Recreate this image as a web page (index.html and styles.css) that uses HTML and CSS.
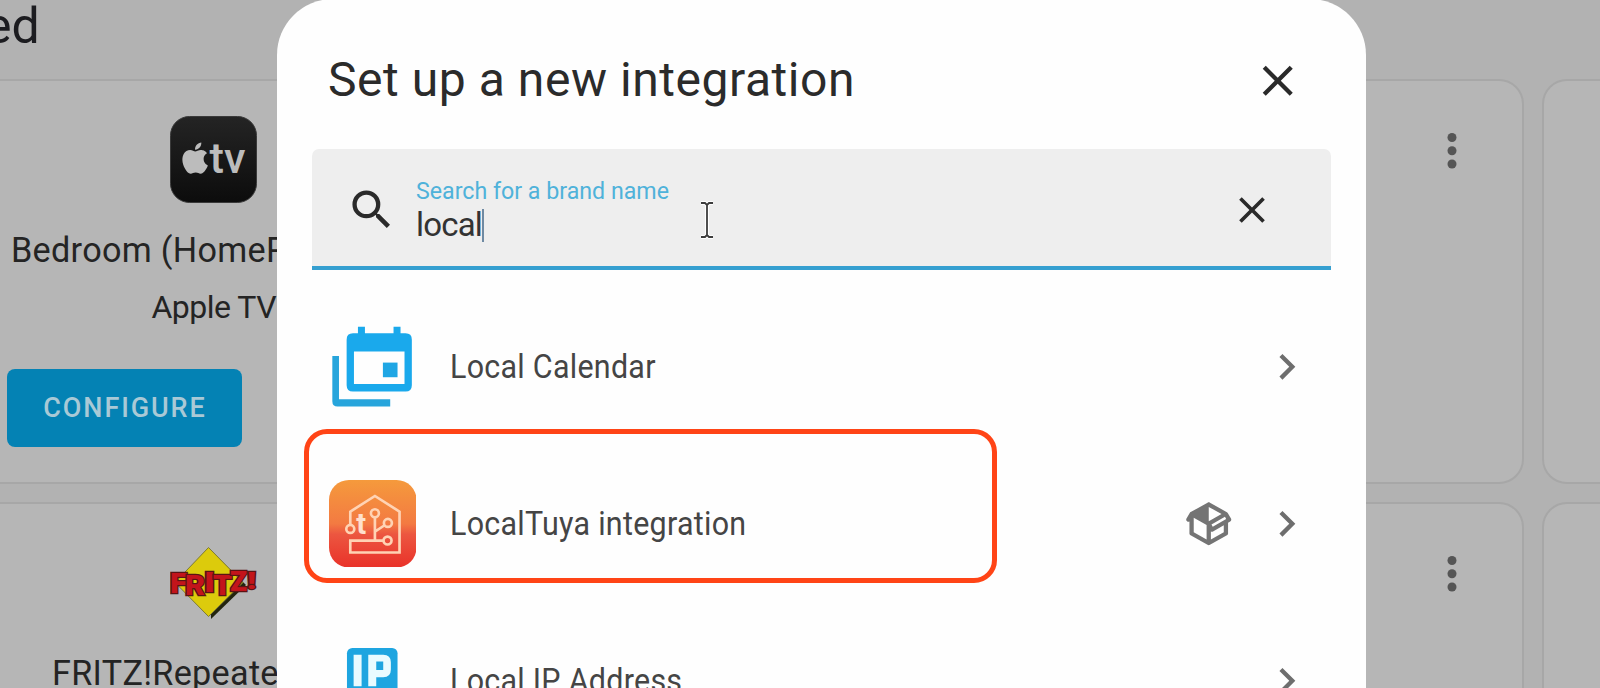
FILE: index.html
```html
<!DOCTYPE html>
<html lang="en">
<head>
<meta charset="utf-8">
<title>Integrations</title>
<link rel="stylesheet" href="styles.css">
</head>
<body>
<div class="stage">
  <main class="page">
    <h2 class="section-title">ed</h2>
    <div class="cards">
      <section class="card">
        <svg class="brand" viewBox="0 0 87 87">
          <defs><linearGradient id="tvbg" x1="0" y1="0" x2="0" y2="1"><stop offset="0" stop-color="#242424"/><stop offset="1" stop-color="#0c0c0c"/></linearGradient></defs>
          <rect x=".5" y=".5" width="86" height="86" rx="19" fill="url(#tvbg)" stroke="#3a3a3a"/>
          <path transform="translate(9.5 26.5) scale(1.3)" fill="#bcbcbc" d="M12.152 6.896c-.948 0-2.415-1.078-3.96-1.04-2.04.027-3.91 1.183-4.961 3.014-2.117 3.675-.546 9.103 1.519 12.09 1.013 1.454 2.208 3.09 3.792 3.039 1.52-.065 2.09-.987 3.935-.987 1.831 0 2.35.987 3.96.948 1.637-.026 2.676-1.48 3.676-2.948 1.156-1.688 1.636-3.325 1.662-3.415-.039-.013-3.182-1.221-3.22-4.857-.026-3.04 2.48-4.494 2.597-4.559-1.429-2.09-3.623-2.324-4.39-2.376-2-.156-3.675 1.09-4.61 1.09zM15.53 3.83c.843-1.012 1.4-2.427 1.245-3.83-1.207.052-2.662.805-3.532 1.818-.78.896-1.454 2.338-1.273 3.714 1.338.104 2.715-.688 3.559-1.701"/>
          <text class="tv" x="39.5" y="57" textLength="36" lengthAdjust="spacingAndGlyphs">tv</text>
        </svg>
        <div class="name name-bedroom">Bedroom (HomeP</div>
        <div class="domain">Apple TV</div>
        <button class="configure">CONFIGURE</button>
      </section>
      <section class="card"></section>
      <section class="card">
        <svg class="dots" viewBox="0 0 12 40"><circle cx="6" cy="6.5" r="4.5"/><circle cx="6" cy="19.8" r="4.5"/><circle cx="6" cy="33" r="4.5"/></svg>
      </section>
      <section class="card"></section>
      <section class="card">
        <svg class="brand" viewBox="0 0 87 87">
          <path d="M40 11L76 46L41 80Z" fill="#23250f"/>
          <path d="M38.500 8.500L73 43.500L38.500 77.500L5 43.500Z" fill="#dccb0c" stroke="#7d7a35" stroke-width="1"/>
          <g class="fritz">
            <text x="0" y="54" textLength="17" lengthAdjust="spacingAndGlyphs">F</text>
            <text x="15" y="56" textLength="20" lengthAdjust="spacingAndGlyphs">R</text>
            <text x="34" y="53" textLength="11" lengthAdjust="spacingAndGlyphs">I</text>
            <text x="43" y="56" textLength="19" lengthAdjust="spacingAndGlyphs">T</text>
            <text x="60" y="52" textLength="17" lengthAdjust="spacingAndGlyphs">Z</text>
            <text class="bang" x="77" y="50" textLength="9" lengthAdjust="spacingAndGlyphs">!</text>
          </g>
        </svg>
        <div class="name name-fritz">FRITZ!Repeate</div>
      </section>
      <section class="card"></section>
      <section class="card">
        <svg class="dots" viewBox="0 0 12 40"><circle cx="6" cy="6.500" r="4.500"/><circle cx="6" cy="19.800" r="4.500"/><circle cx="6" cy="33" r="4.500"/></svg>
      </section>
      <section class="card"></section>
    </div>
  </main>

  <div class="dialog">
    <header class="dialog-head">
      <h1 class="dialog-title">Set up a new integration</h1>
      <svg class="mdi close" viewBox="0 0 24 24"><path d="M19,6.410L17.590,5L12,10.590L6.410,5L5,6.410L10.590,12L5,17.590L6.410,19L12,13.410L17.590,19L19,17.590L13.410,12L19,6.410Z"/></svg>
    </header>
    <div class="search">
      <svg class="mdi" viewBox="0 0 24 24"><path d="M9.500,3A6.500,6.500 0 0,1 16,9.500C16,11.110 15.410,12.590 14.440,13.730L14.710,14H15.500L20.500,19L19,20.500L14,15.500V14.710L13.730,14.440C12.590,15.410 11.110,16 9.500,16A6.500,6.500 0 0,1 3,9.500A6.500,6.500 0 0,1 9.500,3M9.500,5C7,5 5,7 5,9.500C5,12 7,14 9.500,14C12,14 14,12 14,9.500C14,7 12,5 9.500,5Z"/></svg>
      <div class="field">
        <span class="label">Search for a brand name</span>
        <span class="value">local<i class="caret"></i></span>
      </div>
      <svg class="mdi clear" viewBox="0 0 24 24"><path d="M19,6.410L17.590,5L12,10.590L6.410,5L5,6.410L10.590,12L5,17.590L6.410,19L12,13.410L17.590,19L19,17.590L13.410,12L19,6.410Z"/></svg>
    </div>
    <ul class="list">
      <li class="row">
        <svg class="row-icon" viewBox="58 52 263 263">
          <path fill="#27a5dc" d="M68 151H88V281H242V303H84Q68 303 68 287Z"/>
          <path fill="#1aa9ec" fill-rule="evenodd" d="M145 63H166V83H252V63H273V83H288Q307 83 307 102V239Q307 258 288 258H130Q111 258 111 239V102Q111 83 130 83H145ZM133 138V235H285V138Z"/>
          <path fill="#1fa6e4" d="M220 171H264V215H220Z"/>
        </svg>
        <span class="row-text">Local Calendar</span>
        <svg class="mdi chevron" viewBox="0 0 24 24"><path d="M8.590,16.580L13.170,12L8.590,7.410L10,6L16,12L10,18L8.590,16.580Z"/></svg>
      </li>
      <li class="row">
        <svg class="row-icon" viewBox="55 60 263 263">
          <defs><linearGradient id="tuya" x1="0" y1="0" x2="0" y2="1"><stop offset="0" stop-color="#f59a3c"/><stop offset=".5" stop-color="#f37a42"/><stop offset=".62" stop-color="#ec5640"/><stop offset="1" stop-color="#e93229"/></linearGradient></defs>
          <rect x="55" y="60" width="263" height="263" rx="60" fill="url(#tuya)"/>
          <g fill="none" stroke="#ffd3b4" stroke-width="8">
            <path d="M119 195V155L193 108L267 155V278H119V242H219M193 173V242M193 215L222 196"/>
            <circle cx="119" cy="207" r="12"/><circle cx="193" cy="160" r="12"/><circle cx="232" cy="189" r="12"/><circle cx="231" cy="242" r="12"/>
          </g>
          <text class="tuya-t" x="137" y="222">t</text>
        </svg>
        <span class="row-text">LocalTuya integration</span>
        <svg class="mdi package" viewBox="0 0 24 24"><path d="M2,10.960C1.500,10.680 1.350,10.070 1.630,9.590L3.130,7C3.240,6.800 3.410,6.660 3.600,6.580L11.430,2.180C11.590,2.060 11.790,2 12,2C12.210,2 12.410,2.060 12.570,2.180L20.470,6.620C20.660,6.720 20.820,6.880 20.910,7.080L22.360,9.600C22.640,10.080 22.470,10.690 22,10.960L21,11.540V16.500C21,16.880 20.790,17.210 20.470,17.380L12.570,21.820C12.410,21.940 12.210,22 12,22C11.790,22 11.590,21.940 11.430,21.820L3.530,17.380C3.210,17.210 3,16.880 3,16.500V10.960C2.700,11.130 2.320,11.140 2,10.960M12,4.150V4.150L12,10.850V10.850L17.960,7.500L12,4.150M5,15.910L11,19.290V12.580L5,9.210V15.910M19,15.910V12.690L14,15.590C13.670,15.770 13.300,15.760 13,15.600V19.290L19,15.910M13.850,13.360L20.130,9.730L19.550,8.720L13.270,12.350L13.850,13.360Z"/></svg>
        <svg class="mdi chevron" viewBox="0 0 24 24"><path d="M8.590,16.580L13.170,12L8.590,7.410L10,6L16,12L10,18L8.590,16.580Z"/></svg>
      </li>
      <li class="row">
        <svg class="row-icon" viewBox="57 60 263 263">
          <rect x="111" y="93" width="152" height="200" rx="16" fill="#1ea5e0"/>
          <path fill="#e9fbff" fill-rule="evenodd" d="M131 113H155V208H131ZM175 113H220Q243 113 243 136V158Q243 181 220 181H199V208H175ZM199 134V159H220V134Z"/>
        </svg>
        <span class="row-text">Local IP Address</span>
        <svg class="mdi chevron" viewBox="0 0 24 24"><path d="M8.590,16.580L13.170,12L8.590,7.410L10,6L16,12L10,18L8.590,16.580Z"/></svg>
      </li>
    </ul>
  </div>

  <div class="highlight"></div>
  <svg class="pointer" viewBox="0 0 14 38"><path class="halo" d="M1 2H5L7 4L9 2H13M7 4V34M1 36H5L7 34L9 36H13"/><path d="M1 2H5L7 4L9 2H13M7 4V34M1 36H5L7 34L9 36H13"/></svg>
</div>
</body>
</html>
```

FILE: styles.css
```css
* { box-sizing: border-box; }

body {
  margin: 0;
  font-family: Roboto, "Liberation Sans", sans-serif;
  color: #242424;
}

.stage {
  position: relative;
  width: 1600px;
  height: 688px;
  overflow: hidden;
  background: #b2b2b2;
}

/* Dimmed page behind the dialog */
.page { height: 688px; overflow: hidden; }

.section-title {
  margin: 0 0 0 -15px;
  height: 79px;
  padding-top: 1px;
  font-size: 50px;
  font-weight: 400;
  line-height: 50px;
  color: #1c1c20;
}

.cards {
  display: grid;
  grid-template-columns: repeat(4, 509.500px);
  grid-auto-rows: 405px;
  gap: 18px 18.500px;
  margin-left: -42px;
}

.card {
  display: flex;
  flex-direction: column;
  align-items: center;
  padding-top: 35px;
  border: 2px solid #a7a7a7;
  border-radius: 25px;
  background: #b6b6b6;
}

.brand { display: block; flex: none; width: 87px; height: 87px; margin-left: 2px; }
.tv { font: 500 43px Roboto, sans-serif; fill: #bcbcbc; }

.fritz {
  font: 900 27px Roboto, sans-serif;
  fill: #c3141b;
  stroke: #5a1414;
  stroke-width: 2.500px;
  paint-order: stroke;
}
.fritz .bang { font-size: 23px; }

.name {
  align-self: flex-start;
  margin-top: 27px;
  line-height: 40px;
  font-size: 34.200px;
  white-space: nowrap;
}
.name-bedroom { padding-left: 51px; letter-spacing: .3px; }
.name-fritz { padding-left: 92px; letter-spacing: .3px; }

.domain { margin-top: 17px; margin-left: 2px; font-size: 32px; line-height: 40px; letter-spacing: -.5px; }

.configure {
  align-self: flex-start;
  margin: 42px 0 0 47px;
  width: 235px;
  height: 78px;
  padding: 0 0 0 1px;
  border: 0;
  border-radius: 8px;
  background: #0482b4;
  color: #a9c9d6;
  font: 500 27px Roboto, sans-serif;
  letter-spacing: 1.900px;
}

.dots { align-self: flex-end; width: 12px; height: 40px; margin: 15px 63.500px 0 0; fill: #555; }

/* Dialog */
.dialog {
  position: absolute;
  left: 277px;
  top: -1px;
  width: 1089px;
  height: 760px;
  padding: 14px 35px 0;
  border-radius: 56px;
  background: #fefefe;
}

.mdi { display: block; flex: none; width: 51.500px; height: 51.500px; fill: #2a2a2a; }

.dialog-head {
  display: flex;
  align-items: center;
  justify-content: space-between;
  height: 136px;
  padding: 0 27.500px 0 16px;
}

.dialog-title {
  margin: 0 0 3px;
  font-size: 48px;
  font-weight: 400;
  letter-spacing: .55px;
  line-height: 56px;
  color: #2b2b2b;
}

.search {
  display: flex;
  align-items: center;
  height: 121px;
  padding: 5px 57px 0 34px;
  border-bottom: 4px solid #359fd0;
  border-radius: 7px 7px 0 0;
  background: #eee;
}

.field { flex: 1; margin: 2px 0 0 18.500px; display: flex; flex-direction: column; }
.label { font-size: 23.200px; line-height: 28px; color: #4fb2da; }
.value { display: flex; align-items: center; font-size: 33px; line-height: 40px; color: #333; letter-spacing: -.8px; }
.caret { width: 2px; height: 33px; background: #6f8aa3; }
.clear { width: 44px; height: 44px; }

.list { margin: 0; padding: 18px 0 0; list-style: none; }

.row {
  display: flex;
  align-items: center;
  height: 157px;
  padding: 0 18.500px 0 16.500px;
}

.row-icon { display: block; flex: none; width: 87.500px; height: 87.500px; }
.row-text {
  flex: 1;
  margin-left: 33.500px;
  font-size: 33px;
  letter-spacing: .3px;
  color: #454545;
  transform: scaleX(.922);
  transform-origin: left center;
}
.chevron { margin-left: 27px; fill: #6e6e6e; }
.package { fill: #747474; }
.tuya-t { font: 700 88px Roboto, sans-serif; fill: #ffe0cc; }

/* Overlays */
.highlight {
  position: absolute;
  left: 304px;
  top: 429px;
  width: 693px;
  height: 154px;
  border: 5px solid #ff4416;
  border-radius: 23px;
}

.pointer { position: absolute; left: 700px; top: 201px; width: 14px; height: 38px; fill: none; stroke: #3c3c3c; stroke-width: 1.800; }
.pointer .halo { stroke: #fff; stroke-width: 4; }
```
